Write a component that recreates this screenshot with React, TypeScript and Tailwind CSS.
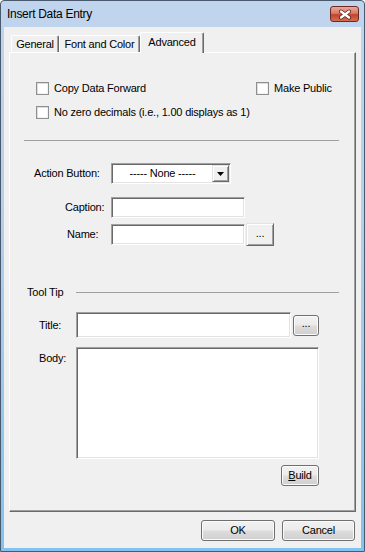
import React from "react";

const sunken =
  "border border-t-[#a0a0a0] border-l-[#a0a0a0] border-r-white border-b-white bg-white shadow-[inset_1px_1px_0_#696969,inset_-1px_-1px_0_#e3e3e3]";
const raised =
  "border border-t-[#e3e3e3] border-l-[#e3e3e3] border-r-[#696969] border-b-[#696969] bg-[#f0f0f0] shadow-[inset_1px_1px_0_#ffffff,inset_-1px_-1px_0_#a0a0a0]";
const themed =
  "rounded-[3px] border border-[#707070] bg-[linear-gradient(to_bottom,#f2f2f2_0%,#ebebeb_48%,#dddddd_52%,#cfcfcf_100%)] shadow-[inset_0_0_0_1px_#fbfbfb] flex items-center justify-center";

function Checkbox({ label }: { label: string }) {
  return (
    <div className="flex items-center gap-[5px]">
      <div className="w-[13px] h-[13px] border border-[#8f8f8f] bg-white shadow-[inset_1px_1px_0_#dcdcdc,inset_-1px_-1px_0_#f2f2f2]" />
      <span>{label}</span>
    </div>
  );
}

function Tab({ label, w, active }: { label: string; w: string; active?: boolean }) {
  return (
    <div
      className={
        active
          ? `${w} h-[21px] -mb-px relative z-10 bg-[#f0f0f0] border-t border-l border-r border-t-white border-l-white border-r-[#696969] shadow-[inset_-1px_0_0_#a0a0a0] rounded-t-[2px] flex items-start justify-center pt-[3px]`
          : `${w} h-[17px] bg-[#f0f0f0] border-t border-l border-r border-t-white border-l-white border-r-[#696969] shadow-[inset_-1px_0_0_#a0a0a0] rounded-t-[2px] flex items-center justify-center`
      }
    >
      {label}
    </div>
  );
}

export default function App() {
  return (
    <div className="w-[365px] h-[552px] flex flex-col border border-[#4a5a6e] rounded-t-[4px] bg-[linear-gradient(to_bottom,#c0d5ed_0%,#b6cfea_40%,#80c3ee_100%)] font-['Liberation_Sans',Arial,sans-serif] text-[11px] leading-[13px] tracking-[-0.2px] text-black overflow-hidden">
      {/* title bar */}
      <div className="h-[26px] flex items-center justify-between pl-[6px] pr-[5px]">
        <span className="text-[12px] tracking-[-0.3px] text-black">Insert Data Entry</span>
        <div className="w-[29px] h-[16px] rounded-[3px] border border-[#6d2a22] bg-[linear-gradient(to_bottom,#eaa89a_0%,#d97a64_45%,#c2432d_55%,#d56e52_100%)] flex items-center justify-center">
          <svg width="14" height="11" viewBox="0 0 14 11">
            <path d="M3 2.5 L11 8.5 M11 2.5 L3 8.5" stroke="#5a1f1a" strokeWidth="4" strokeLinecap="round" />
            <path d="M3 2.5 L11 8.5 M11 2.5 L3 8.5" stroke="#ffffff" strokeWidth="2.4" strokeLinecap="round" />
          </svg>
        </div>
      </div>

      {/* client */}
      <div className="flex-1 mx-[3px] mb-[3px] bg-[#f0f0f0] px-[5px] pt-[5px] flex flex-col">
        <div className="h-[20px] flex items-end pl-[2px]">
          <Tab label="General" w="w-[48px]" />
          <Tab label="Font and Color" w="w-[81px]" />
          <Tab label="Advanced" w="w-[64px]" active />
        </div>

        <div className="h-[460px] border border-t-white border-l-white border-r-[#696969] border-b-[#696969] shadow-[inset_-1px_-1px_0_#a0a0a0] flex flex-col">
          <div className="mt-[29px] pl-[26px] flex items-center h-[13px]">
            <div className="w-[220px]">
              <Checkbox label="Copy Data Forward" />
            </div>
            <Checkbox label="Make Public" />
          </div>
          <div className="mt-[11px] pl-[26px] flex items-center h-[13px]">
            <Checkbox label="No zero decimals (i.e., 1.00 displays as 1)" />
          </div>

          <div className="mt-[21px] ml-[14px] w-[315px] h-px bg-[#a0a0a0]" />

          <div className="mt-[22px] flex items-center h-[21px]">
            <div className="w-[101px] pl-[24px]">Action Button:</div>
            <div className={`${sunken} w-[120px] h-[21px] p-px flex`}>
              <div className="flex-1 flex items-center justify-center">----- None -----</div>
              <div className={`${raised} w-[17px] flex items-center justify-center`}>
                <svg width="7" height="4" viewBox="0 0 7 4">
                  <path d="M0 0h7L3.5 4z" fill="#000" />
                </svg>
              </div>
            </div>
          </div>

          <div className="mt-[13px] flex items-center h-[21px]">
            <div className="w-[101px] pl-[55px]">Caption:</div>
            <div className={`${sunken} w-[134px] h-[21px]`} />
          </div>

          <div className="mt-[5px] flex items-center h-[23px]">
            <div className="w-[101px] pl-[57px]">Name:</div>
            <div className={`${sunken} w-[134px] h-[21px]`} />
            <div className={`${raised} ml-[1px] w-[28px] h-[23px] flex items-center justify-center pb-[2px]`}>...</div>
          </div>

          <div className="mt-[40px] flex items-center h-[13px] pl-[17px]">
            <span className="w-[49px]">Tool Tip</span>
            <div className="w-[263px] h-px bg-[#a0a0a0]" />
          </div>

          <div className="mt-[13px] flex items-center h-[26px]">
            <div className="w-[66px] pl-[29px]">Title:</div>
            <div className={`${sunken} w-[215px] h-[26px]`} />
            <div className={`${themed} ml-[2px] w-[26px] h-[21px] pb-[3px]`}>...</div>
          </div>

          <div className="mt-[9px] flex items-start">
            <div className="w-[66px] pl-[29px] pt-[5px]">Body:</div>
            <div className={`${sunken} w-[243px] h-[112px]`} />
          </div>

          <div className="mt-[6px] flex">
            <div className={`${themed} ml-[271px] w-[38px] h-[21px]`}>
              <span>
                <span className="underline">B</span>uild
              </span>
            </div>
          </div>
        </div>

        <div className="mt-[8px] flex justify-end gap-[7px] mr-px">
          <div className={`${themed} w-[74px] h-[21px]`}>OK</div>
          <div className={`${themed} w-[73px] h-[21px]`}>Cancel</div>
        </div>
      </div>
    </div>
  );
}
